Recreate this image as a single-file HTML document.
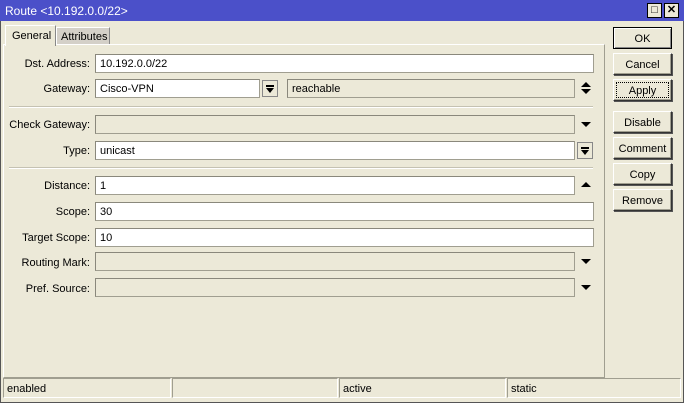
<!DOCTYPE html>
<html><head><style>
*{margin:0;padding:0;box-sizing:border-box}
body{width:684px;height:403px;background:#ece9d8;font-family:"Liberation Sans",sans-serif;font-size:11px;color:#000;position:relative;overflow:hidden}
.a{position:absolute}
.win{left:0;top:0;width:684px;height:403px;border:1px solid #555;border-top:none}
.title{left:0;top:0;width:684px;height:21px;background:#4b50c9;color:#fff;font-size:12px;padding:4px 0 0 5px}
.tb{width:15px;height:15px;top:3px;background:#ece9d8;border:1px solid #000;color:#000;font-size:11px;text-align:center;line-height:12px;font-weight:bold}
.lbl{text-align:right;width:88px;left:2px}
.f{height:19px;border:1px solid #a09e90;background:#fff;padding:3px 0 0 4px;border-top-color:#8a887c;border-left-color:#8a887c}
.d{background:#ece9d8}
.btn{left:613px;width:59px;height:22px;border:1px solid #333;border-top-color:#fff;border-left-color:#fff;box-shadow:1px 1px 0 #555, inset -1px -1px 0 #a09e90;text-align:center;padding-top:5px;background:#ece9d8}
.sep{left:9px;width:584px;height:2px;border-top:1px solid #c5c2b2;border-bottom:1px solid #fff}
.st{top:378px;height:20px;border:1px solid #a09e90;border-bottom-color:#fff;border-right-color:#fff;padding:4px 0 0 3px}
.dn{width:0;height:0;border-left:5px solid transparent;border-right:5px solid transparent;border-top:5px solid #000}
.up{width:0;height:0;border-left:5px solid transparent;border-right:5px solid transparent;border-bottom:5px solid #000}
.sb{width:16px;height:17px;border:1px solid #888;background:#ece9d8}
.sb i{position:absolute;left:3px;width:8px;height:2px;background:#000;top:4px}
.sb b{position:absolute;left:3px;top:7px;width:0;height:0;border-left:4px solid transparent;border-right:4px solid transparent;border-top:5px solid #000}
</style></head><body>
<div class="a win"></div>
<div class="a title">Route &lt;10.192.0.0/22&gt;</div>
<div class="a tb" style="left:647px">□</div>
<div class="a tb" style="left:664px">✕</div>
<div class="a" style="left:3px;top:44px;width:602px;height:334px;border:1px solid #fff;border-right-color:#a09e90;border-bottom-color:#a09e90"></div>
<div class="a" style="left:5px;top:25px;width:51px;height:21px;background:#ece9d8;border:1px solid #fff;border-bottom:none;border-right-color:#888;padding:4px 0 0 6px">General</div>
<div class="a" style="left:56px;top:27px;width:54px;height:17px;background:#d4d0c8;border:1px solid #fff;border-right-color:#888;border-bottom:none;padding:3px 0 0 4px">Attributes</div>

<div class="a lbl" style="top:58px">Dst. Address:</div>
<div class="a f" style="left:95px;top:54px;width:499px">10.192.0.0/22</div>

<div class="a lbl" style="top:83px">Gateway:</div>
<div class="a f" style="left:95px;top:79px;width:165px">Cisco-VPN</div>
<div class="a sb" style="left:262px;top:80px"><i></i><b></b></div>
<div class="a f d" style="left:287px;top:79px;width:288px">reachable</div>
<div class="a up" style="left:581px;top:82px"></div>
<div class="a dn" style="left:581px;top:89px"></div>

<div class="a sep" style="top:106px"></div>

<div class="a lbl" style="top:119px">Check Gateway:</div>
<div class="a f d" style="left:95px;top:115px;width:480px"></div>
<div class="a dn" style="left:581px;top:122px"></div>

<div class="a lbl" style="top:145px">Type:</div>
<div class="a f" style="left:95px;top:141px;width:480px">unicast</div>
<div class="a sb" style="left:577px;top:142px"><i></i><b></b></div>

<div class="a sep" style="top:167px"></div>

<div class="a lbl" style="top:180px">Distance:</div>
<div class="a f" style="left:95px;top:176px;width:480px">1</div>
<div class="a up" style="left:581px;top:182px"></div>

<div class="a lbl" style="top:206px">Scope:</div>
<div class="a f" style="left:95px;top:202px;width:499px">30</div>

<div class="a lbl" style="top:232px">Target Scope:</div>
<div class="a f" style="left:95px;top:228px;width:499px">10</div>

<div class="a lbl" style="top:257px">Routing Mark:</div>
<div class="a f d" style="left:95px;top:252px;width:480px"></div>
<div class="a dn" style="left:581px;top:259px"></div>

<div class="a lbl" style="top:283px">Pref. Source:</div>
<div class="a f d" style="left:95px;top:278px;width:480px"></div>
<div class="a dn" style="left:581px;top:285px"></div>

<div class="a btn" style="top:27px;border:1px solid #000;box-shadow:inset 1px 1px 0 #fff,inset -1px -1px 0 #888">OK</div>
<div class="a btn" style="top:53px">Cancel</div>
<div class="a btn" style="top:79px;outline:1px dotted #000;outline-offset:-4px">Apply</div>
<div class="a btn" style="top:111px">Disable</div>
<div class="a btn" style="top:137px">Comment</div>
<div class="a btn" style="top:163px">Copy</div>
<div class="a btn" style="top:189px">Remove</div>

<div class="a st" style="left:3px;width:168px">enabled</div>
<div class="a st" style="left:172px;width:166px"></div>
<div class="a st" style="left:339px;width:167px">active</div>
<div class="a st" style="left:507px;width:174px">static</div>
</body></html>
